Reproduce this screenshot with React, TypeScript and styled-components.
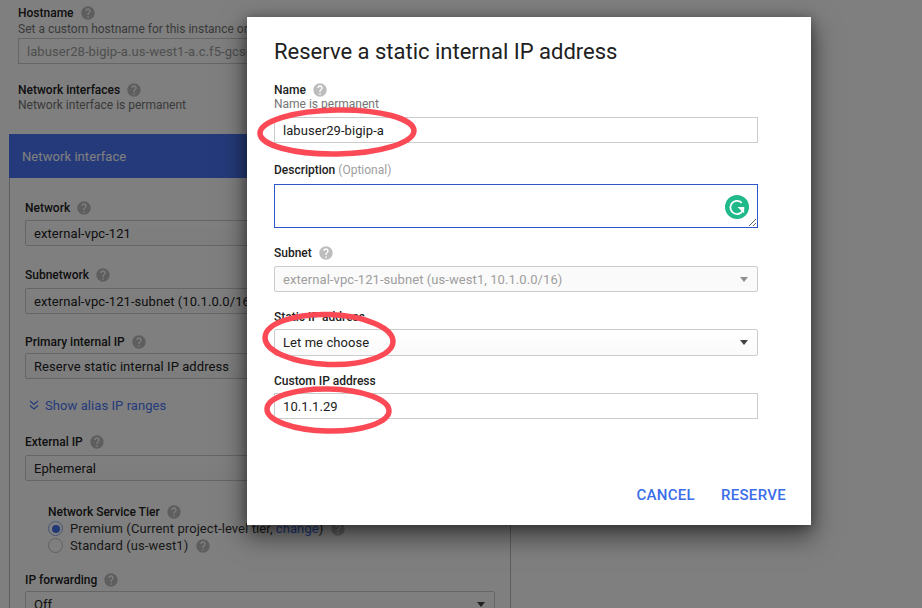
import styled, { createGlobalStyle } from 'styled-components';

const GlobalStyle = createGlobalStyle`
  html, body {
    margin: 0;
    padding: 0;
    background: #fff;
    font-family: Roboto, "Liberation Sans", sans-serif;
  }
`;

const Page = styled.div`
  position: relative;
  width: 922px;
  height: 608px;
  overflow: hidden;
  background: #fff;
`;

const Form = styled.main`
  padding: 5px 0 0 18px;
  width: 492px;
`;

const Section = styled.section<{ $gap?: number }>`
  margin-bottom: ${(p) => p.$gap ?? 0}px;
`;

const Label = styled.div<{ $gap?: number }>`
  display: flex;
  align-items: center;
  gap: 6px;
  height: 15px;
  font-size: 12px;
  font-weight: 500;
  color: #212121;
  margin-bottom: ${(p) => p.$gap ?? 0}px;
`;

const Optional = styled.span`
  font-weight: 400;
  color: #9e9e9e;
`;

const Hint = styled.div<{ $top?: number; $bottom?: number }>`
  margin: ${(p) => p.$top ?? 0}px 0 ${(p) => p.$bottom ?? 0}px;
  font-size: 12px;
  line-height: 14px;
  white-space: nowrap;
  color: #757575;
`;

const Box = styled.div<{ $disabled?: boolean; $h?: number }>`
  box-sizing: border-box;
  display: flex;
  align-items: center;
  justify-content: space-between;
  height: ${(p) => p.$h ?? 26}px;
  padding: 0 9px 0 8px;
  border: 1px solid #ccc;
  font-size: 13px;
  letter-spacing: 0.07px;
  white-space: nowrap;
  overflow: hidden;
  color: ${(p) => (p.$disabled ? '#9e9e9e' : '#212121')};
  background: ${(p) => (p.$disabled ? '#fafafa' : '#fff')};
`;

const SelectBox = styled(Box)`
  border-radius: 2px;
  background: ${(p) => (p.$disabled ? '#fafafa' : 'linear-gradient(#fff, #fafafa)')};
`;

const Caret = styled.i<{ $disabled?: boolean }>`
  flex: none;
  width: 0;
  height: 0;
  border-left: 4.5px solid transparent;
  border-right: 4.5px solid transparent;
  border-top: 5px solid ${(p) => (p.$disabled ? '#8f8f8f' : '#424242')};
`;

const HostInput = styled(Box)`
  width: 480px;
  margin-top: 2px;
  color: #9e9e9e;
`;

const Panel = styled.div`
  margin: 22px 0 0 -9px;
  width: 502px;
  box-sizing: border-box;
  border-left: 1px solid #bdbdbd;
  border-right: 1px solid #bdbdbd;
  height: 500px;
`;

const PanelHeader = styled.div`
  height: 44px;
  margin: 0 -1px;
  display: flex;
  align-items: center;
  padding-left: 13px;
  background: #4975f5;
  color: #fff;
  font-size: 13px;
  letter-spacing: 0.07px;
`;

const PanelBody = styled.div`
  padding: 22px 15px 0;
`;

const AliasLink = styled.div`
  display: flex;
  align-items: center;
  gap: 5px;
  height: 16px;
  margin-bottom: 21px;
  padding-left: 3px;
  font-size: 13px;
  letter-spacing: 0.07px;
  color: #4975f5;
`;

const Tier = styled.div`
  padding-left: 23px;
  margin-bottom: 18px;
`;

const TierOptions = styled.div`
  margin-top: 1px;
`;

const RadioRow = styled.div`
  display: flex;
  align-items: center;
  gap: 7px;
  height: 17px;
  font-size: 13px;
  letter-spacing: 0.08px;
  color: #333;
  white-space: nowrap;
`;

const Radio = styled.span<{ $on?: boolean }>`
  flex: none;
  box-sizing: border-box;
  width: 15px;
  height: 15px;
  border-radius: 50%;
  border: 1px solid ${(p) => (p.$on ? '#8ea8f0' : '#bdbdbd')};
  display: flex;
  align-items: center;
  justify-content: center;

  &::after {
    content: '';
    width: 8px;
    height: 8px;
    border-radius: 50%;
    background: ${(p) => (p.$on ? '#4470ee' : 'transparent')};
  }
`;

const Change = styled.span`
  color: #4470ee;
`;

const Scrim = styled.div`
  position: absolute;
  inset: 0;
  background: rgba(0, 0, 0, 0.5);
`;

const Dialog = styled.div`
  position: absolute;
  left: 247px;
  top: 17px;
  width: 564px;
  height: 508px;
  box-sizing: border-box;
  padding: 21px 53px 0 27px;
  background: #fff;
  box-shadow: 0 10px 24px 2px rgba(0, 0, 0, 0.5), 0 2px 10px rgba(0, 0, 0, 0.3);
`;

const Title = styled.h2`
  margin: 0 0 16px;
  font-size: 22px;
  font-weight: 400;
  line-height: 28px;
  color: #212121;
`;

const NoteArea = styled.div`
  position: relative;
  height: 44px;
  margin-bottom: 17px;
`;

const Note = styled.textarea`
  display: block;
  box-sizing: border-box;
  width: 100%;
  height: 44px;
  margin: 0;
  border: 1px solid #2f55c9;
  border-radius: 0;
  outline: none;
  resize: both;
  background: #fff;
`;

const GrammarlyBadge = styled.svg`
  position: absolute;
  right: 9px;
  top: 11px;
  width: 24px;
  height: 24px;
`;

const Actions = styled.div`
  position: absolute;
  right: 25px;
  bottom: 21px;
  display: flex;
  gap: 26px;
`;

const ActionButton = styled.button`
  padding: 0;
  border: 0;
  background: none;
  font-family: inherit;
  font-size: 15px;
  font-weight: 500;
  letter-spacing: 0.3px;
  color: #3b6ee8;
`;

const Marks = styled.svg`
  position: absolute;
  inset: 0;
  width: 100%;
  height: 100%;
  pointer-events: none;
`;

const Help = () => (
  <svg width="16" height="16" viewBox="0 0 24 24" fill="#bdbdbd" style={{ flex: 'none' }}>
    <path d="M12 2C6.48 2 2 6.48 2 12s4.48 10 10 10 10-4.48 10-10S17.52 2 12 2zm1 17h-2v-2h2v2zm2.07-7.75l-.9.92C13.45 12.9 13 13.5 13 15h-2v-.5c0-1.1.45-2.1 1.17-2.83l1.24-1.26c.37-.36.59-.86.59-1.41 0-1.1-.9-2-2-2s-2 .9-2 2H8c0-2.21 1.79-4 4-4s4 1.79 4 4c0 .88-.36 1.68-.93 2.25z" />
  </svg>
);

export default function App() {
  return (
    <Page>
      <GlobalStyle />
      <Form>
        <Section $gap={18}>
          <Label>
            Hostname <Help />
          </Label>
          <Hint $top={2}>Set a custom hostname for this instance or</Hint>
          <HostInput>labuser28-bigip-a.us-west1-a.c.f5-gcs-</HostInput>
        </Section>
        <Section>
          <Label>
            Network interfaces <Help />
          </Label>
          <Hint $top={1}>Network interface is permanent</Hint>
        </Section>
        <Panel>
          <PanelHeader>Network interface</PanelHeader>
          <PanelBody>
            <Section $gap={21}>
              <Label $gap={5}>
                Network <Help />
              </Label>
              <SelectBox>
                external-vpc-121 <Caret />
              </SelectBox>
            </Section>
            <Section $gap={20}>
              <Label $gap={6}>
                Subnetwork <Help />
              </Label>
              <SelectBox>
                external-vpc-121-subnet (10.1.0.0/16) <Caret />
              </SelectBox>
            </Section>
            <Section $gap={18}>
              <Label $gap={4}>
                Primary internal IP <Help />
              </Label>
              <SelectBox>
                Reserve static internal IP address <Caret />
              </SelectBox>
            </Section>
            <AliasLink>
              <svg width="12" height="12" viewBox="0 0 12 12" fill="none" stroke="#4975f5" strokeWidth="1.3">
                <path d="M2 2l4 3.5L10 2M2 6.5L6 10l4-3.5" />
              </svg>
              Show alias IP ranges
            </AliasLink>
            <Section $gap={23}>
              <Label $gap={6}>
                External IP <Help />
              </Label>
              <SelectBox>
                Ephemeral <Caret />
              </SelectBox>
            </Section>
            <Tier>
              <Label>
                Network Service Tier <Help />
              </Label>
              <TierOptions>
                <RadioRow>
                  <Radio $on />
                  <span>
                    Premium (Current project-level tier, <Change>change</Change>)
                  </span>
                  <Help />
                </RadioRow>
                <RadioRow>
                  <Radio />
                  <span>Standard (us-west1)</span>
                  <Help />
                </RadioRow>
              </TierOptions>
            </Tier>
            <Section>
              <Label $gap={4}>
                IP forwarding <Help />
              </Label>
              <SelectBox>
                Off <Caret />
              </SelectBox>
            </Section>
          </PanelBody>
        </Panel>
      </Form>
      <Scrim />
      <Dialog>
        <Title>Reserve a static internal IP address</Title>
        <Section $gap={19}>
          <Label>
            Name <Help />
          </Label>
          <Hint $bottom={6}>Name is permanent</Hint>
          <Box>labuser29-bigip-a</Box>
        </Section>
        <Label $gap={7}>
          <span>
            Description <Optional>(Optional)</Optional>
          </span>
        </Label>
        <NoteArea>
          <Note />
          <GrammarlyBadge viewBox="0 0 24 24">
            <circle cx="12" cy="12" r="12" fill="#1fb98a" />
            <path d="M16.8 7.9A6.6 6.6 0 1 0 18.6 12.5" fill="none" stroke="#fff" strokeWidth="1.7" />
            <path d="M12.5 12h6.6v6.2z" fill="#fff" />
          </GrammarlyBadge>
        </NoteArea>
        <Section $gap={17}>
          <Label $gap={6}>
            Subnet <Help />
          </Label>
          <SelectBox $disabled>
            external-vpc-121-subnet (us-west1, 10.1.0.0/16) <Caret $disabled />
          </SelectBox>
        </Section>
        <Section $gap={17}>
          <Label $gap={5}>Static IP address</Label>
          <SelectBox $h={27}>
            Let me choose <Caret />
          </SelectBox>
        </Section>
        <Section>
          <Label $gap={5}>Custom IP address</Label>
          <Box>10.1.1.29</Box>
        </Section>
        <Actions>
          <ActionButton>CANCEL</ActionButton>
          <ActionButton>RESERVE</ActionButton>
        </Actions>
        <Marks viewBox="247 17 564 508" fill="none" stroke="#fb4a55" strokeWidth="5.5">
          <ellipse cx="337" cy="132" rx="77" ry="22" transform="rotate(-1 337 132)" />
          <ellipse cx="329" cy="339.5" rx="64" ry="25" transform="rotate(2 329 339.5)" />
          <ellipse cx="328" cy="410" rx="61" ry="21" transform="rotate(1 328 410)" />
        </Marks>
      </Dialog>
    </Page>
  );
}
